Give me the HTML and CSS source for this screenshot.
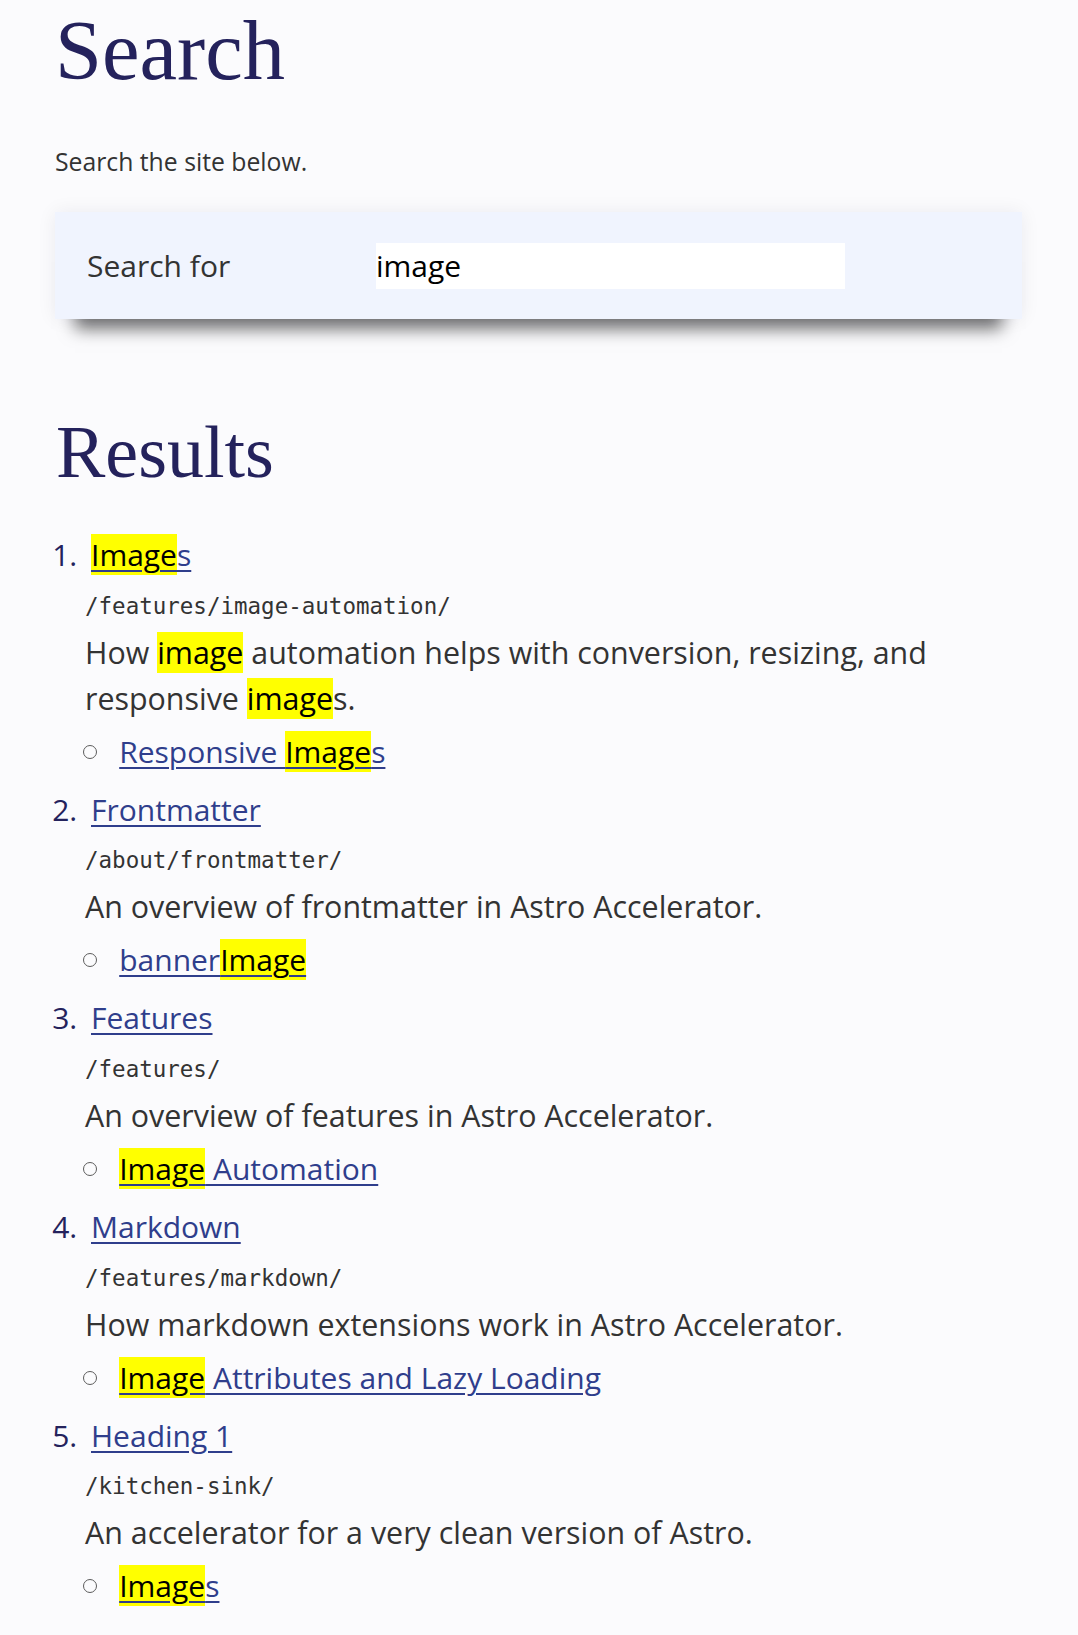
FILE: index.html
```html
<!DOCTYPE html>
<html lang="en">
<head>
<meta charset="utf-8">
<title>Search</title>
<link rel="stylesheet" href="styles.css">
</head>
<body>
<main class="page">
  <h1 class="page-title">Search</h1>
  <p class="intro">Search the site below.</p>
  <form class="search-box">
    <label class="search-label" for="q">Search for</label>
    <input class="search-input" id="q" type="text" value="image">
  </form>

  <h2 class="results-title">Results</h2>
  <ol class="results">
    <li class="result">
      <div class="result-title"><a href="#"><mark>Image</mark>s</a></div>
      <p class="result-url">/features/image-automation/</p>
      <p class="result-desc">How <mark>image</mark> automation helps with conversion, resizing, and responsive <mark>image</mark>s.</p>
      <ul class="result-subs"><li><a href="#">Responsive <mark>Image</mark>s</a></li></ul>
    </li>
    <li class="result">
      <div class="result-title"><a href="#">Frontmatter</a></div>
      <p class="result-url">/about/frontmatter/</p>
      <p class="result-desc">An overview of frontmatter in Astro Accelerator.</p>
      <ul class="result-subs"><li><a href="#">banner<mark>Image</mark></a></li></ul>
    </li>
    <li class="result">
      <div class="result-title"><a href="#">Features</a></div>
      <p class="result-url">/features/</p>
      <p class="result-desc">An overview of features in Astro Accelerator.</p>
      <ul class="result-subs"><li><a href="#"><mark>Image</mark> Automation</a></li></ul>
    </li>
    <li class="result">
      <div class="result-title"><a href="#">Markdown</a></div>
      <p class="result-url">/features/markdown/</p>
      <p class="result-desc">How markdown extensions work in Astro Accelerator.</p>
      <ul class="result-subs"><li><a href="#"><mark>Image</mark> Attributes and Lazy Loading</a></li></ul>
    </li>
    <li class="result">
      <div class="result-title"><a href="#">Heading 1</a></div>
      <p class="result-url">/kitchen-sink/</p>
      <p class="result-desc">An accelerator for a very clean version of Astro.</p>
      <ul class="result-subs"><li><a href="#"><mark>Image</mark>s</a></li></ul>
    </li>
  </ol>
</main>
</body>
</html>
```

FILE: styles.css
```css
* {
  box-sizing: border-box;
}

html {
  background: #fbfbfd;
}

body {
  margin: 0;
  background: #fbfbfd;
  color: #333333;
  font-family: "Open Sans", "Noto Sans", sans-serif;
}

.page {
  padding: 9.2px 56px 40px 55px;
}

.page-title {
  margin: 0;
  font-family: "Liberation Serif", "Times New Roman", serif;
  font-weight: 400;
  font-size: 84.5px;
  line-height: 1;
  color: #24225c;
}

.intro {
  margin: 49.2px 0 0;
  font-size: 24.75px;
  line-height: 37px;
  color: #333333;
}

.search-box {
  display: flex;
  align-items: center;
  margin: 31.8px 0 0;
  padding: 31px 32px 30px;
  background: #f0f4fe;
  box-shadow: 0 0 18px rgba(20, 20, 60, 0.07), 0 30px 16px -20px rgba(0, 0, 0, 0.55);
}

.search-label {
  flex: 0 0 289px;
  font-size: 30px;
  line-height: 46px;
  color: #333333;
}

.search-input {
  flex: 0 0 469px;
  height: 46px;
  margin: 0;
  padding: 0;
  border: 0;
  background: #ffffff;
  font-family: inherit;
  font-size: 30px;
  color: #000000;
  outline: none;
}

.results-title {
  margin: 96.3px 0 0 1px;
  font-family: "Liberation Serif", "Times New Roman", serif;
  font-weight: 400;
  font-size: 74px;
  line-height: 1;
  color: #24225c;
}

.results {
  margin: 38.3px 0 0;
  padding: 0 0 0 30px;
  font-size: 30px;
}

.result::marker {
  color: #24225c;
}

.result + .result {
  margin-top: 0.6px;
}

.result-title {
  padding-left: 6px;
  line-height: 55.6px;
}

a {
  color: #2f3e8c;
  text-decoration-thickness: 2px;
  text-underline-offset: 4px;
}

mark {
  background: #ffff00;
  color: #000000;
}

.result-url {
  margin: 0;
  font-family: "DejaVu Sans Mono", "Liberation Mono", monospace;
  font-size: 22.5px;
  line-height: 47px;
  color: #333333;
}

.result-desc {
  margin: 0;
  font-size: 30.4px;
  line-height: 46px;
  color: #333333;
}

.result-subs {
  margin: 0;
  padding-left: 36.5px;
  list-style: none;
  line-height: 59.4px;
}

.result-subs li::before {
  content: "";
  display: inline-block;
  width: 12px;
  height: 12px;
  margin-left: -38.8px;
  margin-right: 22.5px;
  border: 1px solid #5c5c5c;
  border-radius: 50%;
  vertical-align: 4px;
}
```
